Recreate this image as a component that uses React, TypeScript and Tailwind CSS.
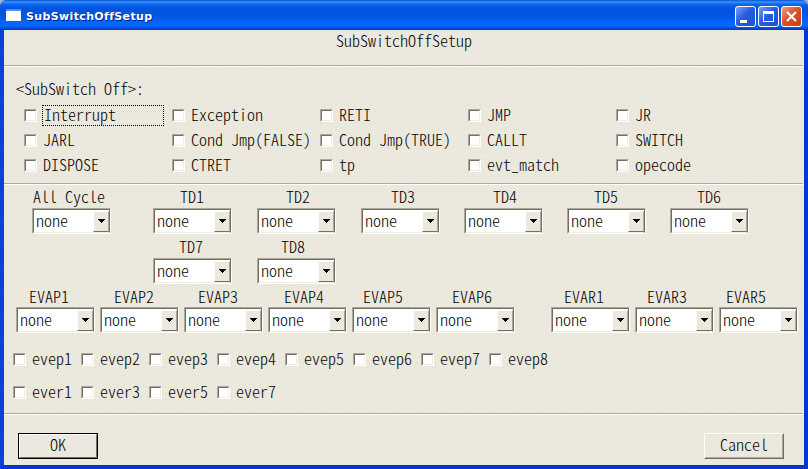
const mono =
  "font-['Noto_Sans_CJK_JP','Liberation_Mono',monospace] font-light text-[16px] leading-[18px] whitespace-pre text-black [font-feature-settings:'hwid','liga'_0,'kern'_0,'clig'_0,'dlig'_0]";

const speckle =
  "bg-[conic-gradient(from_270deg_at_1px_1px,#f0d9cd_90deg,transparent_0),conic-gradient(from_270deg_at_1px_1px,#e6dccb_90deg,transparent_0)] bg-[length:6px_12px,6px_12px] bg-[position:2px_3px,5px_9px]";

function Rule() {
  return <div className="h-[2px] shrink-0 border-t border-[#aca899] bg-white mr-px" />;
}

function Box() {
  return (
    <span className="block size-[13px] shrink-0 border border-t-[#aca899] border-l-[#aca899] border-r-white border-b-white">
      <span className="block size-full border border-t-[#716f64] border-l-[#716f64] border-r-[#f1efe2] border-b-[#f1efe2] bg-white" />
    </span>
  );
}

function Check({ label, className, focused }: { label: string; className: string; focused?: boolean }) {
  return (
    <label className={`flex items-center ${className}`}>
      <Box />
      {focused ? (
        <span className="ml-[5px] h-[21px] w-[122px] shrink-0 border border-dotted border-black pl-px leading-[17px]">{label}</span>
      ) : (
        <span className="ml-[6px] mb-[3px]">{label}</span>
      )}
    </label>
  );
}

function Combo({ label, pad, gap = "" }: { label: string; pad: string; gap?: string }) {
  return (
    <div className={`w-[79px] shrink-0 ${gap}`}>
      <div className={`h-[20px] ${pad}`}>{label}</div>
      <div className="h-[26px] border border-t-[#aca899] border-l-[#aca899] border-r-white border-b-white">
        <div className="flex h-full justify-between border border-t-[#716f64] border-l-[#716f64] border-r-[#716f64] border-b-[#f1efe2] bg-white">
          <span className="pl-[2px] pt-px">none</span>
          <span className="mt-px flex h-[21px] w-[16px] items-center justify-center border border-t-white border-l-white border-r-[#aca899] border-b-[#716f64] bg-[#ebe9dd]">
            <svg width="7" height="4" viewBox="0 0 7 4" shapeRendering="crispEdges" className="mb-[2px]">
              <path d="M0 0h7v1h-1v1h-1v1h-1v1h-1v-1h-1v-1h-1v-1h-1z" />
            </svg>
          </span>
        </div>
      </div>
    </div>
  );
}

const checks = [
  "Interrupt", "Exception", "RETI", "JMP", "JR",
  "JARL", "Cond Jmp(FALSE)", "Cond Jmp(TRUE)", "CALLT", "SWITCH",
  "DISPOSE", "CTRET", "tp", "evt_match", "opecode",
];

const cap = "flex size-[21px] items-center justify-center rounded-[3px] border border-white";

export default function App() {
  return (
    <div className="flex h-[469px] w-[808px] flex-col overflow-hidden bg-[#9db0d8]">
      <div className="flex h-full flex-col overflow-hidden rounded-t-[7px] bg-[#0831d9]">
        <header className="flex h-[30px] shrink-0 items-center bg-[linear-gradient(180deg,#0a50d0_0,#3c92ff_2px,#0a6bf0_4px,#0453de_8px,#0355e2_16px,#0466fa_22px,#0468ff_26px,#0350d8_28px,#0138b4_30px)] pl-[6px] pr-[6px] pt-[3px]">
          <span className="mt-[-3px] h-[12px] w-[15px] border-t-2 border-[#3d95ff] bg-[#fffffa]" />
          <span className="ml-[5px] mt-px font-['DejaVu_Sans','Noto_Sans',sans-serif] text-[11px] font-bold leading-[16px] tracking-[0.36px] text-white [text-shadow:1px_1px_0_#0a1883] [font-variant-ligatures:none]">
            SubSwitchOffSetup
          </span>
          <div className="ml-auto flex gap-[2px]">
            <span className={`${cap} bg-[linear-gradient(135deg,#7ba0f5,#2a5ce0_45%,#2050cc)]`}>
              <span className="mr-[5px] mt-[9px] h-[3px] w-[7px] bg-white" />
            </span>
            <span className={`${cap} bg-[linear-gradient(135deg,#7ba0f5,#2a5ce0_45%,#2050cc)]`}>
              <span className="size-[11px] border border-t-[3px] border-white" />
            </span>
            <span className={`${cap} bg-[linear-gradient(135deg,#f0a080,#e05028_45%,#c83c10)]`}>
              <svg width="11" height="11" viewBox="0 0 11 11">
                <path d="M1 1l9 9M10 1l-9 9" stroke="#fff" strokeWidth="2.2" />
              </svg>
            </span>
          </div>
        </header>
        <div className="min-h-0 flex-1 border-x-4 border-b-4 border-[#0543dc] border-r-[#0437d0] border-b-[#0437d0]">
          <main className={`flex h-full flex-col bg-[#ebe9dd] ${speckle} ${mono}`}>
            <h1 className="h-[35px] pt-px text-center">SubSwitchOffSetup</h1>
            <Rule />
            <section className="h-[116px] pt-[12px]">
              <div className="h-[25px] pl-[12px]">{"<SubSwitch Off>:"}</div>
              <div className="mt-[-1px] grid auto-rows-[25px] grid-cols-[repeat(5,148px)] pl-[20px]">
                {checks.map((c, i) => (
                  <Check key={c} label={c} className="" focused={i === 0} />
                ))}
              </div>
            </section>
            <Rule />
            <section className="h-[228px] pt-[3px]">
              <div className="flex h-[50px] pl-[28px]">
                <Combo label="All Cycle" pad="pl-[1px] mt-[-1px] mb-px" />
                <Combo label="TD1" pad="pl-[27px] mt-[-1px] mb-px" gap="ml-[42px]" />
                <Combo label="TD2" pad="pl-[29px] mt-[-1px] mb-px" gap="ml-[25px]" />
                <Combo label="TD3" pad="pl-[30px] mt-[-1px] mb-px" gap="ml-[25px]" />
                <Combo label="TD4" pad="pl-[29px] mt-[-1px] mb-px" gap="ml-[24px]" />
                <Combo label="TD5" pad="pl-[27px] mt-[-1px] mb-px" gap="ml-[24px]" />
                <Combo label="TD6" pad="pl-[27px] mt-[-1px] mb-px" gap="ml-[24px]" />
              </div>
              <div className="flex h-[49px] pl-[149px]">
                <Combo label="TD7" pad="pl-[26px] mt-[-1px] mb-px" />
                <Combo label="TD8" pad="pl-[24px] mt-[-1px] mb-px" gap="ml-[25px]" />
              </div>
              <div className="flex h-[58px] pl-[12px]">
                <Combo label="EVAP1" pad="pl-[13px]" />
                <Combo label="EVAP2" pad="pl-[14px]" gap="ml-[5px]" />
                <Combo label="EVAP3" pad="pl-[14px]" gap="ml-[5px]" />
                <Combo label="EVAP4" pad="pl-[16px]" gap="ml-[5px]" />
                <Combo label="EVAP5" pad="pl-[11px]" gap="ml-[5px]" />
                <Combo label="EVAP6" pad="pl-[16px]" gap="ml-[5px]" />
                <Combo label="EVAR1" pad="pl-[13px]" gap="ml-[36px]" />
                <Combo label="EVAR3" pad="pl-[12px]" gap="ml-[5px]" />
                <Combo label="EVAR5" pad="pl-[7px]" gap="ml-[5px]" />
              </div>
              <div className="flex h-[33px] pl-[9px]">
                {["evep1", "evep2", "evep3", "evep4", "evep5", "evep6", "evep7", "evep8"].map((c) => (
                  <Check key={c} label={c} className="h-[28px] w-[68px]" />
                ))}
              </div>
              <div className="flex pl-[9px]">
                {["ever1", "ever3", "ever5", "ever7"].map((c) => (
                  <Check key={c} label={c} className="h-[28px] w-[68px]" />
                ))}
              </div>
            </section>
            <Rule />
            <footer className="flex justify-between pl-[14px] pr-[20px] pt-[18px]">
              <button className="h-[26px] w-[80px] border border-black">
                <span className="flex h-full items-center justify-center border border-t-white border-l-white border-r-[#716f64] border-b-[#716f64] pb-[5px]">
                  OK
                </span>
              </button>
              <button className="h-[26px] w-[80px] border border-t-white border-l-white border-r-[#716f64] border-b-[#716f64]">
                <span className="flex h-full items-center justify-center border border-transparent border-r-[#aca899] border-b-[#aca899] pb-[5px]">
                  Cancel
                </span>
              </button>
            </footer>
          </main>
        </div>
      </div>
    </div>
  );
}
